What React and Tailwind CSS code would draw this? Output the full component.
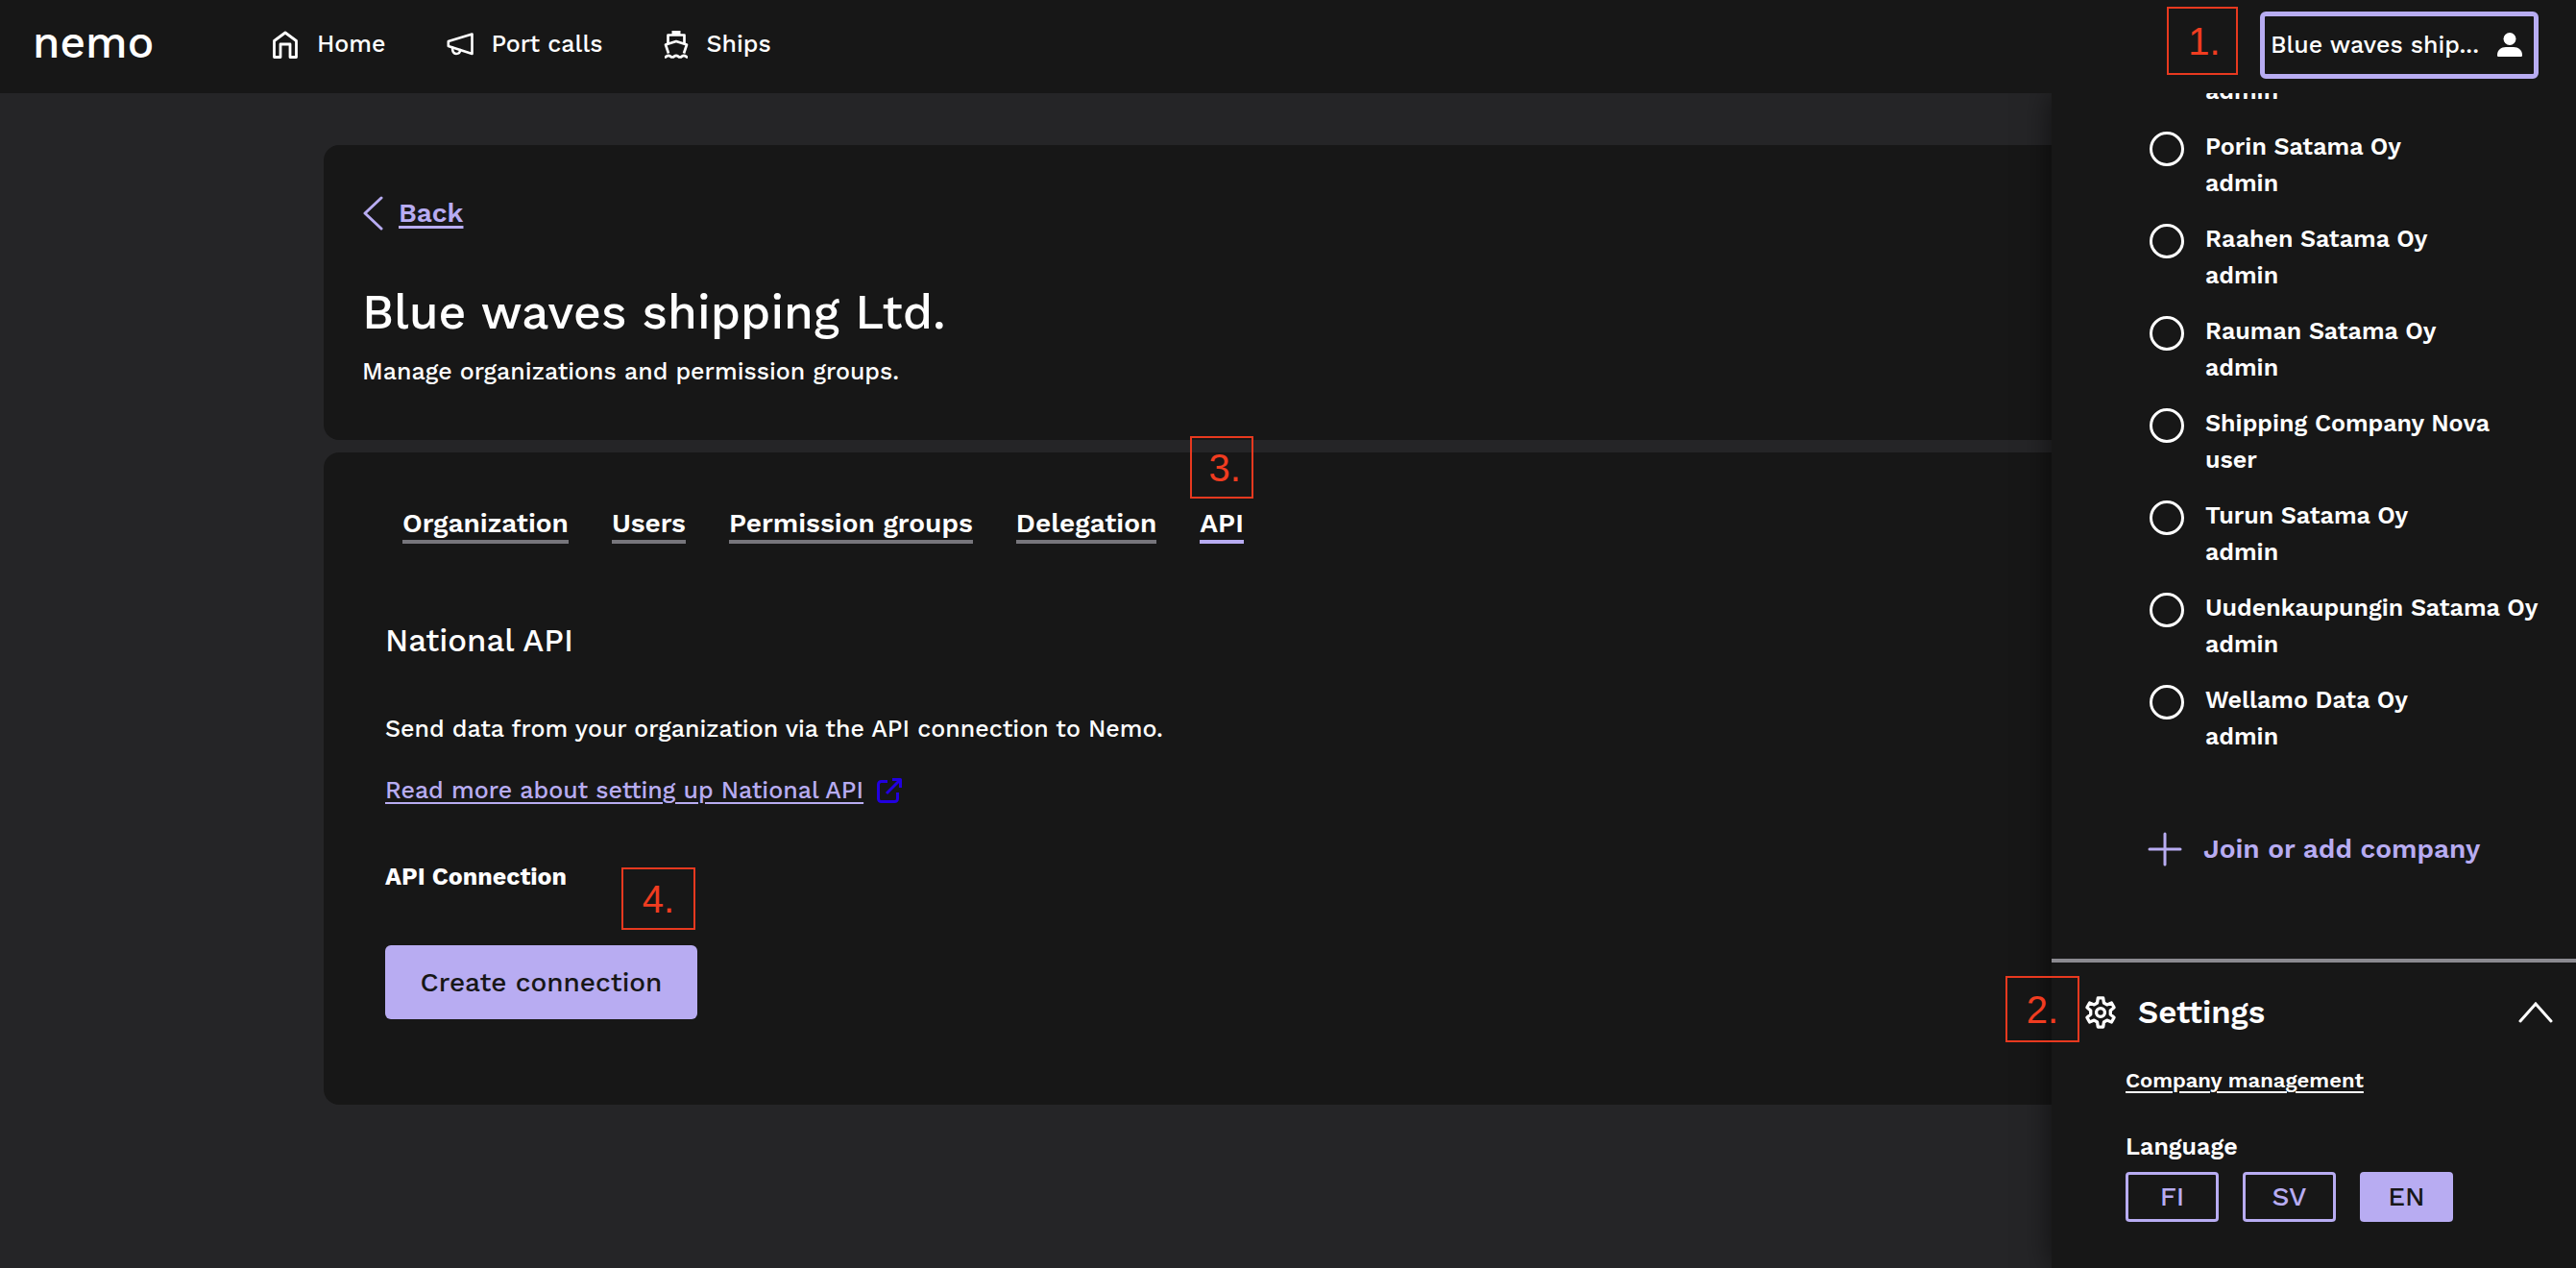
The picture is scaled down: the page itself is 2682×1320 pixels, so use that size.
import React from "react";

const HomeIcon = () => (
  <svg viewBox="0 0 26 29" className="h-[29px] w-[26px]" fill="none" stroke="currentColor" strokeWidth="2.8" strokeLinejoin="round">
    <path d="M1.500 10.500 13 2l11.500 8.500V27.500H18V14H8v13.500H1.500z" />
  </svg>
);
const HornIcon = () => (
  <svg viewBox="0 0 28 24" className="h-6 w-7" fill="none" stroke="currentColor" strokeWidth="2.6" strokeLinejoin="round" strokeLinecap="round">
    <path d="M26.500 1.500v20.500L1.800 14V9z" />
    <path d="M6 15.500c0 4 1.200 6.500 4 6.500s4-1.500 4.200-4" />
  </svg>
);
const ShipIcon = () => (
  <svg viewBox="0 0 26 29" className="h-[29px] w-[26px]" fill="none" stroke="currentColor" strokeWidth="2.7" strokeLinejoin="round">
    <path d="M4.500 13V4.500h17V13" />
    <path d="M8.500 0h9v4h-9z" fill="currentColor" stroke="none" />
    <path d="M5 23.500 2 14.500 13 11l11 3.500-3 9" />
    <path d="M1 27.500c2 0 2-1.700 4-1.700s2 1.700 4 1.700 2-1.700 4-1.700 2 1.700 4 1.700 2-1.700 4-1.700 2 1.700 4 1.700" />
  </svg>
);
const UserIcon = () => (
  <svg viewBox="0 0 26 26" className="h-[26px] w-[26px] shrink-0" fill="currentColor">
    <circle cx="13" cy="6.500" r="6.500" />
    <path d="M0 23.500C0 18 4 15 9 15h8c5 0 9 3 9 8.500 0 1-.7 1.500-1.500 1.500h-23C.7 25 0 24.500 0 23.500z" />
  </svg>
);
const GearIcon = () => (
  <svg viewBox="0 0 24 24" className="h-[38px] w-[38px]" fill="none" stroke="currentColor" strokeWidth="2.1" strokeLinejoin="round">
    <path d="M10.300 2.500h3.400l.5 3.200 2 1.200 3-1.200 1.700 3-2.400 2.100v2.400l2.400 2.100-1.700 3-3-1.200-2 1.200-.5 3.200h-3.400l-.5-3.200-2-1.200-3 1.200-1.700-3 2.400-2.100v-2.400L3.100 8.700l1.700-3 3 1.200 2-1.200z" />
    <circle cx="12" cy="12" r="2.800" />
  </svg>
);
const ExternalIcon = () => (
  <svg viewBox="0 0 26 26" className="h-[26px] w-[26px]" fill="none" stroke="currentColor" strokeWidth="3" strokeLinejoin="round">
    <path d="M11 3.500H4.500a3 3 0 0 0-3 3v15a3 3 0 0 0 3 3h14a3 3 0 0 0 3-3V15" />
    <path d="M16 1.500h8.500V10M24 2 10 16" />
  </svg>
);

const companies = [
  ["Porin Satama Oy", "admin"],
  ["Raahen Satama Oy", "admin"],
  ["Rauman Satama Oy", "admin"],
  ["Shipping Company Nova", "user"],
  ["Turun Satama Oy", "admin"],
  ["Uudenkaupungin Satama Oy", "admin"],
  ["Wellamo Data Oy", "admin"],
];
const tabs = ["Organization", "Users", "Permission groups", "Delegation", "API"];

function Marker({ className, children }) {
  return (
    <span className={`absolute z-20 flex items-center justify-center border-2 border-[#e8391f] font-['Liberation_Sans'] text-[40px] leading-none font-normal text-[#f03c20] ${className}`}>
      {children}
    </span>
  );
}

export default function App() {
  return (
    <div className="flex h-screen flex-col overflow-hidden bg-[#252527] font-['Work_Sans','Noto_Sans',sans-serif] text-[25px] font-medium text-white">
      <header className="z-10 flex h-[97px] shrink-0 items-start bg-[#171717] pr-[39px] pl-[34px]">
        <a href="#home" className="mt-[12px] w-[250px] text-[46px] leading-[64px]">nemo</a>
        <nav className="mt-[28px] flex gap-[64px] leading-9">
          <a href="#home" className="flex items-center gap-5"><HomeIcon />Home</a>
          <a href="#calls" className="flex items-center gap-[18px]"><HornIcon />Port calls</a>
          <a href="#ships" className="flex items-center gap-[18px]"><ShipIcon />Ships</a>
        </nav>
        <div className="relative mt-3 ml-auto">
          <Marker className="-top-[5px] right-[313px] h-[71px] w-[74px] pl-1">1.</Marker>
          <button className="flex h-[70px] w-[290px] items-center justify-between rounded-md border-[5px] border-[#b8acf2] pr-3 pl-[6px] whitespace-nowrap">
            Blue waves ship...
            <UserIcon />
          </button>
        </div>
      </header>
      <div className="flex min-h-0 grow">
        <main className="min-w-0 grow pt-[54px] pl-[337px]">
          <section className="h-[307px] rounded-l-2xl bg-[#171717] pt-[51px] pl-10">
            <a href="#back" className="flex items-center gap-4 text-[28px] leading-10 font-semibold text-[#b8acf2]">
              <svg viewBox="0 0 22 36" className="h-9 w-[22px]" fill="none" stroke="currentColor" strokeWidth="3" strokeLinecap="round" strokeLinejoin="round"><path d="M20 2 3 18l17 16" /></svg>
              <span className="underline decoration-[3px] underline-offset-4">Back</span>
            </a>
            <h1 className="mt-[49px] text-[50px] leading-[68px] font-medium">Blue waves shipping Ltd.</h1>
            <p className="mt-[8px] leading-10">Manage organizations and permission groups.</p>
          </section>
          <section className="mt-[13px] h-[679px] rounded-l-2xl bg-[#171717] pt-[50px] pl-16">
            <nav className="ml-[18px] flex gap-[45px] text-[28px] leading-[35px] font-semibold">
              {tabs.map((t) => (
                <a key={t} href="#tab" className={`relative border-b-4 pt-[6px] ${t === "API" ? "border-[#b8acf2]" : "border-[#77767c]"}`}>
                  {t}
                  {t === "API" && <Marker className="-top-[67px] -left-[10px] h-[65px] w-[66px] pl-[6px]">3.</Marker>}
                </a>
              ))}
            </nav>
            <h2 className="mt-[75px] text-[33px] leading-[52px]">National API</h2>
            <p className="mt-[46px] leading-10">Send data from your organization via the API connection to Nemo.</p>
            <a href="#docs" className="mt-6 flex items-center gap-[14px] leading-10 text-[#b8acf2]">
              <span className="underline decoration-2 underline-offset-4">Read more about setting up National API</span>
              <span className="text-[#2200e0]"><ExternalIcon /></span>
            </a>
            <h3 className="relative mt-[50px] w-[190px] leading-10 font-bold whitespace-nowrap">
              API Connection
              <Marker className="top-[10px] left-[246px] h-[65px] w-[77px]">4.</Marker>
            </h3>
            <button className="mt-[51px] h-[77px] w-[325px] rounded-md bg-[#b8acf2] text-[28px] text-[#171717]">Create connection</button>
          </section>
        </main>
        <aside className="relative flex w-[546px] shrink-0 flex-col bg-[#171717] shadow-[0_0_30px_rgba(0,0,0,0.6)]">
          <div className="flex h-[901px] flex-col justify-end overflow-hidden">
            <p className="mb-[20px] pl-[160px] leading-[38px] font-semibold">admin</p>
            <fieldset className="flex flex-col gap-[20px] pl-[102px]">
              {companies.map(([name, role]) => (
                <label key={name} className="flex items-start gap-[22px] leading-[38px] font-semibold whitespace-nowrap">
                  <input type="radio" name="company" className="mt-[3px] h-9 w-9 shrink-0 appearance-none rounded-full border-[3px] border-white" />
                  <span>{name}<br />{role}</span>
                </label>
              ))}
            </fieldset>
            <button className="mt-[74px] mb-[90px] ml-[100px] flex items-center gap-[22px] text-[28px] leading-[48px] font-semibold text-[#b8acf2]">
              <svg viewBox="0 0 36 36" className="h-9 w-9" fill="none" stroke="currentColor" strokeWidth="3" strokeLinecap="round"><path d="M18 2v32M2 18h32" /></svg>
              Join or add company
            </button>
          </div>
          <div className="relative border-t-4 border-[#8b8a90] pr-6 pl-[32px]">
            <Marker className="top-[14px] -left-[48px] h-[69px] w-[77px]">2.</Marker>
            <button className="mt-[26px] flex w-full items-center text-[33px] leading-[52px] font-semibold">
              <GearIcon />
              <span className="ml-5">Settings</span>
              <svg viewBox="0 0 36 24" className="ml-auto h-6 w-9" fill="none" stroke="currentColor" strokeWidth="3" strokeLinecap="round"><path d="M2 21 18 3l16 18" /></svg>
            </button>
            <div className="pl-[45px]">
              <a href="#company" className="mt-[27px] block text-[22px] leading-9 font-semibold underline decoration-2 underline-offset-4">Company management</a>
              <p className="mt-[31px] text-[25px] leading-10 font-semibold">Language</p>
              <div className="mt-[6px] flex gap-[25px] text-[28px]">
                {["FI", "SV", "EN"].map((l) => (
                  <button key={l} className={`h-[52px] w-[97px] rounded-[4px] border-[3px] border-[#b8acf2] leading-none ${l === "EN" ? "bg-[#b8acf2] text-[#171717]" : "text-[#b8acf2]"}`}>{l}</button>
                ))}
              </div>
            </div>
          </div>
        </aside>
      </div>
    </div>
  );
}
